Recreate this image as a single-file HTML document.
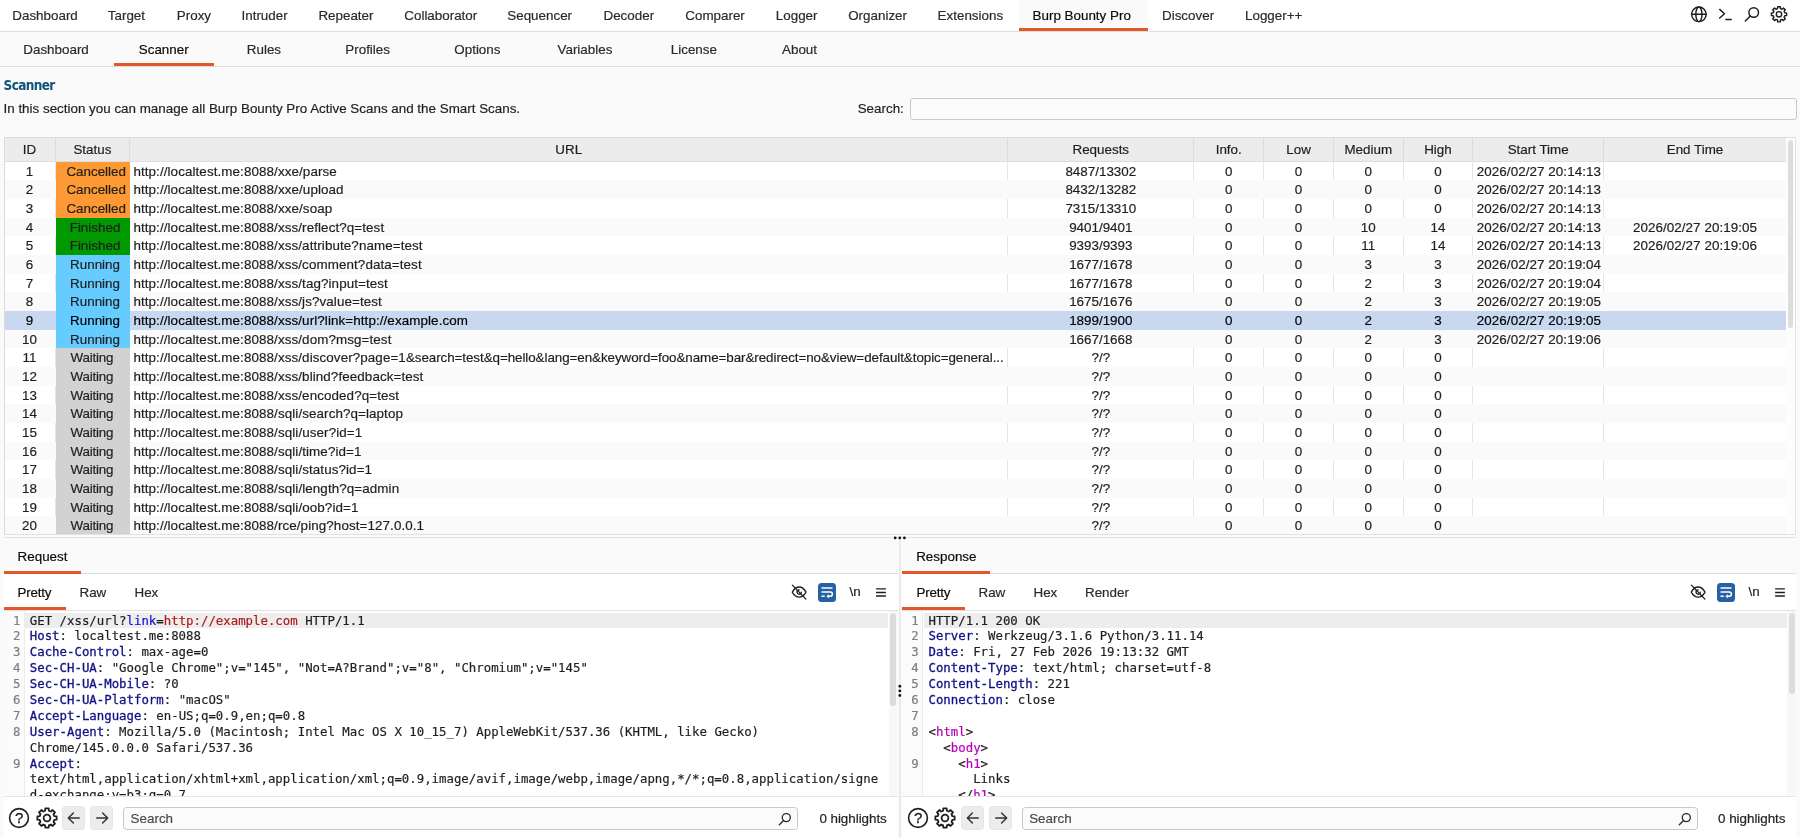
<!DOCTYPE html>
<html lang="en"><head><meta charset="utf-8"><title>Burp Suite - Burp Bounty Pro Scanner</title>
<style>
*{box-sizing:border-box;margin:0;padding:0}
html,body{width:1800px;height:838px;overflow:hidden}
body{position:relative;will-change:transform;-webkit-text-stroke:0.18px;background:#fafafa;font-family:"Liberation Sans",Arial,sans-serif;font-size:13.4px;color:#1e1e1e;line-height:16px}
.abs{position:absolute;white-space:nowrap}
#topbar{position:absolute;left:0;top:0;width:1800px;height:32px;background:#fff;border-bottom:1px solid #dedede}
#topbar .t{position:absolute;top:7.7px;white-space:nowrap;color:#2a2a2a}
#topbar .act{position:absolute;left:1019px;top:0;width:129px;height:31px;background:#fafafa;border-bottom:3px solid #e2572a}
#topbar .t.on{color:#0a0a0a}
#subbar{position:absolute;left:0;top:32px;width:1800px;height:35px;background:#fafafa;border-bottom:1px solid #dedede}
#subbar .t{position:absolute;top:9.8px;white-space:nowrap;color:#2a2a2a}
#subbar .t.on{color:#0a0a0a}
#subbar .ul{position:absolute;left:113.7px;top:31px;width:100.3px;height:3px;background:#e2572a}
#title{left:3.6px;top:76.6px;font-family:"DejaVu Sans Condensed","DejaVu Sans","Liberation Sans",sans-serif;font-weight:bold;font-size:13.5px;color:#0e5478;letter-spacing:-0.65px;-webkit-text-stroke:0}
#desc{left:3.5px;top:100.9px}
#slabel{left:857.7px;top:100.9px}
#sbox{position:absolute;left:909.5px;top:98px;width:887px;height:22px;border:1px solid #c9c9c9;border-radius:3px;background:#fbfbfb}
/* table */
#tbl{position:absolute;left:4px;top:137px;width:1792.3px;height:397.8px;background:#fff;overflow:hidden;border:1px solid #e2e2e2;border-width:0 1px 1px 0}
#tbl:before{content:"";position:absolute;left:0;top:0;width:1px;height:100%;background:#dcdcdc;z-index:3}
.thead{position:absolute;left:0;top:0;width:1782px;height:24.7px;background:#ececec;border-top:1px solid #dcdcdc;border-bottom:1px solid #dedede}
.th{position:absolute;top:0;height:22.7px;line-height:24.6px;overflow:hidden;text-align:center;border-right:1px solid #dcdcdc;color:#1e1e1e}
.tr{position:absolute;left:0;width:1782px;height:18.66px;background:#fff}
.tr.alt{background:#fafafa}
.tr.sel{background:#c8d8f0}
.td{position:absolute;top:0;height:18.66px;line-height:19.7px;text-align:center;white-space:nowrap;overflow:hidden;border-right:1px solid #e6e6e6;color:#1e1e1e}
.tr.alt .td{border-right-color:transparent}
.tr.sel .td{border-right-color:transparent;color:#000}
.td.c2{text-align:left;padding-left:3.2px;letter-spacing:0.095px}
.td.c2.long .la{letter-spacing:0.095px}
.td.c2.long .lb{letter-spacing:-0.066px}
.td.c8{text-align:left;padding-left:3.5px}
.td.c8,.td.c9{letter-spacing:0.07px}
.td.c1{border-right:0}
.s-can{padding-left:6.6px}
.s-fin,.s-run{padding-left:4.3px}
.s-wai{padding-right:2px;letter-spacing:-0.2px}
.s-can{background:#ff9933}
.s-fin{background:#009900}
.s-run{background:#66ccff}
.s-wai{background:#d2d2d2}
.vsb{position:absolute;left:1782px;top:0;width:10px;height:100%;background:#fdfdfd;border-top:1px solid #dcdcdc}
.vsb i{position:absolute;left:2.1px;top:1.8px;width:5.2px;height:188.5px;border-radius:3px;background:#dddddd}
/* bottom panes */
#hsplit{position:absolute;left:4px;top:537px;width:1792.3px;height:1px;background:#e3e3e3}
#hdots{position:absolute;left:892.2px;top:534px;width:16px;height:8px;z-index:5}
#vsplit{position:absolute;left:899.1px;top:538px;width:1.7px;height:300px;background:#ebebeb}
#vdots{position:absolute;left:896px;top:682.5px;width:8px;height:16px;z-index:5}
.pane{position:absolute;top:538px;width:893.7px;height:300px;background:#fff;overflow:hidden}
.ptitle{position:absolute;left:0;top:0;width:100%;height:36.3px;background:#fafafa;border-bottom:1px solid #dedede}
.ptitle span{position:absolute;left:13.6px;top:11.3px;color:#0a0a0a;white-space:nowrap}
.ptitle i{position:absolute;left:0;top:32.8px;height:3px;background:#e2572a}
.ptabs{position:absolute;left:0;top:36.3px;width:100%;height:36.4px;background:#fff;border-bottom:1px solid #e0e0e0}
.pt{position:absolute;top:10.7px;white-space:nowrap;color:#2a2a2a}
.pt.on{color:#0a0a0a;letter-spacing:-0.2px}
.pul{position:absolute;left:0;top:32.7px;height:3px;background:#e2572a}
.ic{position:absolute}
.eye{left:786.8px;top:9.7px}
.wrapb{left:813.8px;top:8.5px;width:18.5px;height:19px;border-radius:3.5px;background:#2462a5}
.wrapb svg{position:absolute;left:0;top:0.1px}
.nl{left:845.5px;top:9.7px;font-size:13.400px;color:#1e1e1e;white-space:nowrap}
.ham{left:871.2px;top:12.3px}
.ed{position:absolute;left:0;top:72.7px;width:100%;height:185.6px;background:#fff;overflow:hidden;font-family:"DejaVu Sans Mono","Liberation Mono",monospace;font-size:12.37px;line-height:15.885px;color:#1e1e1e}
.gut{position:absolute;left:0;top:0;width:20.7px;height:100%;background:#fbfbfb;border-right:1px solid #ececec}
.hl{position:absolute;left:21px;top:2.2px;width:863px;height:15.2px;background:#ededed}
.ln{position:absolute;left:0;height:15.885px;white-space:pre;top:0;margin-top:2.9px}
.ln .no{position:absolute;left:0;top:0;width:16.5px;text-align:right;font-weight:normal;color:#7e7e7e}
.ln .tx{position:absolute;left:25.8px;top:0;white-space:pre}
.ln .hn{color:#111186;-webkit-text-stroke:0.3px #111186}
.ln .pn{color:#1111cc}
.ln .pv{color:#b11a1a}
.ln .tg{color:#ba00ba;-webkit-text-stroke:0.2px #ba00ba}
.esb{position:absolute;left:884.5px;top:0;width:9.2px;height:100%;background:#f8f8f8}
.esb i{position:absolute;left:1.800px;top:2.3px;width:5.500px;height:90px;border-radius:3px;background:#dcdcdc}
.pfoot{position:absolute;left:0;top:258.3px;width:100%;height:42px;background:#fff;border-top:1px solid #e6e6e6}
.help{left:4.2px;top:10.0px}
.gear2{left:30.6px;top:9.0px}
.nb{position:absolute;top:9.2px;width:22.8px;height:23.1px;border-radius:3.5px;background:#ececec;border:1px solid #e6e6e6}
.nb svg{position:absolute;left:2.7px;top:2.9px}
.sbx{position:absolute;left:119.1px;top:9.9px;width:675.3px;height:22.4px;border:1px solid #c9c9c9;border-radius:3.5px;background:#fbfbfb}
.sbx span{position:absolute;left:6.5px;top:3.2px;color:#4a4a4a}
.sbx .mag{position:absolute;left:654.3px;top:4px}
.hl0{position:absolute;left:815.4px;top:13.8px;white-space:nowrap;color:#1e1e1e;letter-spacing:-0.03px}
#ticons{position:absolute;left:1685px;top:0}
#res{width:894.2px}
#res .ic{margin-left:0.8px}
#res .esb{margin-left:0.6px}
#res .hl{left:21.8px;width:863px}
.td.c9,.th:last-child{border-right:0}
#res .sbx{width:676px}
#res .hl0{margin-left:0.5px}
#res .sbx .mag{margin-left:0.6px}
#res .ln .tx{left:26.3px}
#res .pt{margin-left:0.8px}
#res .ptitle span{margin-left:0.4px}
#res .gear2{margin-left:-0.2px}
#res .nb,#res .sbx{margin-left:0.4px}

</style></head>
<body>
<div id="topbar">
<div class="act"></div>
<span class="t" style="left:12.3px">Dashboard</span>
<span class="t" style="left:107.8px">Target</span>
<span class="t" style="left:176.8px">Proxy</span>
<span class="t" style="left:241.5px">Intruder</span>
<span class="t" style="left:318.4px">Repeater</span>
<span class="t" style="left:404.3px">Collaborator</span>
<span class="t" style="left:507.3px">Sequencer</span>
<span class="t" style="left:603.5px">Decoder</span>
<span class="t" style="left:685.3px">Comparer</span>
<span class="t" style="left:775.8px">Logger</span>
<span class="t" style="left:848.2px">Organizer</span>
<span class="t" style="left:937.6px">Extensions</span>
<span class="t on" style="left:1032.6px">Burp Bounty Pro</span>
<span class="t" style="left:1162px">Discover</span>
<span class="t" style="left:1245px">Logger++</span>
<svg id="ticons" viewBox="0 0 110 31" width="110" height="31"><g fill="none" stroke="#1e1e1e" stroke-width="1.450" stroke-linecap="round" stroke-linejoin="round">
<circle cx="13.900" cy="14.300" r="7.300"/><ellipse cx="13.900" cy="14.300" rx="3.100" ry="7.300"/><path d="M6.600 14.300h14.600"/>
<path d="M34.700 9.400l4.800 4.300-4.800 4.300M40.800 19.400h5.400"/>
<circle cx="68.700" cy="12.500" r="4.800"/><path d="M65.300 16L60.300 21"/>
<path d="M92.52 8.59 L92.68 6.71 L95.32 6.71 L95.48 8.59 L97.00 9.22 L98.43 8.00 L100.30 9.87 L99.08 11.30 L99.71 12.82 L101.59 12.98 L101.59 15.62 L99.71 15.78 L99.08 17.30 L100.30 18.73 L98.43 20.60 L97.00 19.38 L95.48 20.01 L95.32 21.89 L92.68 21.89 L92.52 20.01 L91.00 19.38 L89.57 20.60 L87.70 18.73 L88.92 17.30 L88.29 15.78 L86.41 15.62 L86.41 12.98 L88.29 12.82 L88.92 11.30 L87.70 9.87 L89.57 8.00 L91.00 9.22Z"/><circle cx="94" cy="14.300" r="2.700"/>
</g></svg>
</div>
<div id="subbar">
<div class="ul"></div>
<span class="t" style="left:23.3px">Dashboard</span>
<span class="t on" style="left:138.8px">Scanner</span>
<span class="t" style="left:246.8px">Rules</span>
<span class="t" style="left:345.3px">Profiles</span>
<span class="t" style="left:454.3px">Options</span>
<span class="t" style="left:557.5px">Variables</span>
<span class="t" style="left:670.8px">License</span>
<span class="t" style="left:782px">About</span>
</div>
<div id="title" class="abs">Scanner</div>
<div id="desc" class="abs">In this section you can manage all Burp Bounty Pro Active Scans and the Smart Scans.</div>
<div id="slabel" class="abs">Search:</div>
<div id="sbox"></div>
<div id="tbl">
<div class="thead">
<div class="th" style="left:0.4px;width:51.2px">ID</div>
<div class="th" style="left:51.6px;width:74.6px">Status</div>
<div class="th" style="left:126.2px;width:878.1px">URL</div>
<div class="th" style="left:1004.3px;width:186.0px">Requests</div>
<div class="th" style="left:1190.3px;width:69.9px">Info.</div>
<div class="th" style="left:1260.2px;width:69.8px">Low</div>
<div class="th" style="left:1330.0px;width:69.6px">Medium</div>
<div class="th" style="left:1399.6px;width:69.7px">High</div>
<div class="th" style="left:1469.3px;width:130.7px">Start Time</div>
<div class="th" style="left:1600.0px;width:182.0px">End Time</div>
</div>
<div class="tr" style="top:24.70px">
<div class="td c0" style="left:0.4px;width:51.2px"><span>1</span></div>
<div class="td c1 s-can" style="left:51.6px;width:74.6px"><span>Cancelled</span></div>
<div class="td c2" style="left:126.2px;width:878.1px"><span>http://localtest.me:8088/xxe/parse</span></div>
<div class="td c3" style="left:1004.3px;width:186.0px"><span>8487/13302</span></div>
<div class="td c4" style="left:1190.3px;width:69.9px"><span>0</span></div>
<div class="td c5" style="left:1260.2px;width:69.8px"><span>0</span></div>
<div class="td c6" style="left:1330.0px;width:69.6px"><span>0</span></div>
<div class="td c7" style="left:1399.6px;width:69.7px"><span>0</span></div>
<div class="td c8" style="left:1469.3px;width:130.7px"><span>2026/02/27 20:14:13</span></div>
<div class="td c9" style="left:1600.0px;width:182.0px"><span></span></div>
</div>
<div class="tr alt" style="top:43.36px">
<div class="td c0" style="left:0.4px;width:51.2px"><span>2</span></div>
<div class="td c1 s-can" style="left:51.6px;width:74.6px"><span>Cancelled</span></div>
<div class="td c2" style="left:126.2px;width:878.1px"><span>http://localtest.me:8088/xxe/upload</span></div>
<div class="td c3" style="left:1004.3px;width:186.0px"><span>8432/13282</span></div>
<div class="td c4" style="left:1190.3px;width:69.9px"><span>0</span></div>
<div class="td c5" style="left:1260.2px;width:69.8px"><span>0</span></div>
<div class="td c6" style="left:1330.0px;width:69.6px"><span>0</span></div>
<div class="td c7" style="left:1399.6px;width:69.7px"><span>0</span></div>
<div class="td c8" style="left:1469.3px;width:130.7px"><span>2026/02/27 20:14:13</span></div>
<div class="td c9" style="left:1600.0px;width:182.0px"><span></span></div>
</div>
<div class="tr" style="top:62.02px">
<div class="td c0" style="left:0.4px;width:51.2px"><span>3</span></div>
<div class="td c1 s-can" style="left:51.6px;width:74.6px"><span>Cancelled</span></div>
<div class="td c2" style="left:126.2px;width:878.1px"><span>http://localtest.me:8088/xxe/soap</span></div>
<div class="td c3" style="left:1004.3px;width:186.0px"><span>7315/13310</span></div>
<div class="td c4" style="left:1190.3px;width:69.9px"><span>0</span></div>
<div class="td c5" style="left:1260.2px;width:69.8px"><span>0</span></div>
<div class="td c6" style="left:1330.0px;width:69.6px"><span>0</span></div>
<div class="td c7" style="left:1399.6px;width:69.7px"><span>0</span></div>
<div class="td c8" style="left:1469.3px;width:130.7px"><span>2026/02/27 20:14:13</span></div>
<div class="td c9" style="left:1600.0px;width:182.0px"><span></span></div>
</div>
<div class="tr alt" style="top:80.68px">
<div class="td c0" style="left:0.4px;width:51.2px"><span>4</span></div>
<div class="td c1 s-fin" style="left:51.6px;width:74.6px"><span>Finished</span></div>
<div class="td c2" style="left:126.2px;width:878.1px"><span>http://localtest.me:8088/xss/reflect?q=test</span></div>
<div class="td c3" style="left:1004.3px;width:186.0px"><span>9401/9401</span></div>
<div class="td c4" style="left:1190.3px;width:69.9px"><span>0</span></div>
<div class="td c5" style="left:1260.2px;width:69.8px"><span>0</span></div>
<div class="td c6" style="left:1330.0px;width:69.6px"><span>10</span></div>
<div class="td c7" style="left:1399.6px;width:69.7px"><span>14</span></div>
<div class="td c8" style="left:1469.3px;width:130.7px"><span>2026/02/27 20:14:13</span></div>
<div class="td c9" style="left:1600.0px;width:182.0px"><span>2026/02/27 20:19:05</span></div>
</div>
<div class="tr" style="top:99.34px">
<div class="td c0" style="left:0.4px;width:51.2px"><span>5</span></div>
<div class="td c1 s-fin" style="left:51.6px;width:74.6px"><span>Finished</span></div>
<div class="td c2" style="left:126.2px;width:878.1px"><span>http://localtest.me:8088/xss/attribute?name=test</span></div>
<div class="td c3" style="left:1004.3px;width:186.0px"><span>9393/9393</span></div>
<div class="td c4" style="left:1190.3px;width:69.9px"><span>0</span></div>
<div class="td c5" style="left:1260.2px;width:69.8px"><span>0</span></div>
<div class="td c6" style="left:1330.0px;width:69.6px"><span>11</span></div>
<div class="td c7" style="left:1399.6px;width:69.7px"><span>14</span></div>
<div class="td c8" style="left:1469.3px;width:130.7px"><span>2026/02/27 20:14:13</span></div>
<div class="td c9" style="left:1600.0px;width:182.0px"><span>2026/02/27 20:19:06</span></div>
</div>
<div class="tr alt" style="top:118.00px">
<div class="td c0" style="left:0.4px;width:51.2px"><span>6</span></div>
<div class="td c1 s-run" style="left:51.6px;width:74.6px"><span>Running</span></div>
<div class="td c2" style="left:126.2px;width:878.1px"><span>http://localtest.me:8088/xss/comment?data=test</span></div>
<div class="td c3" style="left:1004.3px;width:186.0px"><span>1677/1678</span></div>
<div class="td c4" style="left:1190.3px;width:69.9px"><span>0</span></div>
<div class="td c5" style="left:1260.2px;width:69.8px"><span>0</span></div>
<div class="td c6" style="left:1330.0px;width:69.6px"><span>3</span></div>
<div class="td c7" style="left:1399.6px;width:69.7px"><span>3</span></div>
<div class="td c8" style="left:1469.3px;width:130.7px"><span>2026/02/27 20:19:04</span></div>
<div class="td c9" style="left:1600.0px;width:182.0px"><span></span></div>
</div>
<div class="tr" style="top:136.66px">
<div class="td c0" style="left:0.4px;width:51.2px"><span>7</span></div>
<div class="td c1 s-run" style="left:51.6px;width:74.6px"><span>Running</span></div>
<div class="td c2" style="left:126.2px;width:878.1px"><span>http://localtest.me:8088/xss/tag?input=test</span></div>
<div class="td c3" style="left:1004.3px;width:186.0px"><span>1677/1678</span></div>
<div class="td c4" style="left:1190.3px;width:69.9px"><span>0</span></div>
<div class="td c5" style="left:1260.2px;width:69.8px"><span>0</span></div>
<div class="td c6" style="left:1330.0px;width:69.6px"><span>2</span></div>
<div class="td c7" style="left:1399.6px;width:69.7px"><span>3</span></div>
<div class="td c8" style="left:1469.3px;width:130.7px"><span>2026/02/27 20:19:04</span></div>
<div class="td c9" style="left:1600.0px;width:182.0px"><span></span></div>
</div>
<div class="tr alt" style="top:155.32px">
<div class="td c0" style="left:0.4px;width:51.2px"><span>8</span></div>
<div class="td c1 s-run" style="left:51.6px;width:74.6px"><span>Running</span></div>
<div class="td c2" style="left:126.2px;width:878.1px"><span>http://localtest.me:8088/xss/js?value=test</span></div>
<div class="td c3" style="left:1004.3px;width:186.0px"><span>1675/1676</span></div>
<div class="td c4" style="left:1190.3px;width:69.9px"><span>0</span></div>
<div class="td c5" style="left:1260.2px;width:69.8px"><span>0</span></div>
<div class="td c6" style="left:1330.0px;width:69.6px"><span>2</span></div>
<div class="td c7" style="left:1399.6px;width:69.7px"><span>3</span></div>
<div class="td c8" style="left:1469.3px;width:130.7px"><span>2026/02/27 20:19:05</span></div>
<div class="td c9" style="left:1600.0px;width:182.0px"><span></span></div>
</div>
<div class="tr sel" style="top:173.98px">
<div class="td c0" style="left:0.4px;width:51.2px"><span>9</span></div>
<div class="td c1 s-run" style="left:51.6px;width:74.6px"><span>Running</span></div>
<div class="td c2" style="left:126.2px;width:878.1px"><span>http://localtest.me:8088/xss/url?link=http://example.com</span></div>
<div class="td c3" style="left:1004.3px;width:186.0px"><span>1899/1900</span></div>
<div class="td c4" style="left:1190.3px;width:69.9px"><span>0</span></div>
<div class="td c5" style="left:1260.2px;width:69.8px"><span>0</span></div>
<div class="td c6" style="left:1330.0px;width:69.6px"><span>2</span></div>
<div class="td c7" style="left:1399.6px;width:69.7px"><span>3</span></div>
<div class="td c8" style="left:1469.3px;width:130.7px"><span>2026/02/27 20:19:05</span></div>
<div class="td c9" style="left:1600.0px;width:182.0px"><span></span></div>
</div>
<div class="tr alt" style="top:192.64px">
<div class="td c0" style="left:0.4px;width:51.2px"><span>10</span></div>
<div class="td c1 s-run" style="left:51.6px;width:74.6px"><span>Running</span></div>
<div class="td c2" style="left:126.2px;width:878.1px"><span>http://localtest.me:8088/xss/dom?msg=test</span></div>
<div class="td c3" style="left:1004.3px;width:186.0px"><span>1667/1668</span></div>
<div class="td c4" style="left:1190.3px;width:69.9px"><span>0</span></div>
<div class="td c5" style="left:1260.2px;width:69.8px"><span>0</span></div>
<div class="td c6" style="left:1330.0px;width:69.6px"><span>2</span></div>
<div class="td c7" style="left:1399.6px;width:69.7px"><span>3</span></div>
<div class="td c8" style="left:1469.3px;width:130.7px"><span>2026/02/27 20:19:06</span></div>
<div class="td c9" style="left:1600.0px;width:182.0px"><span></span></div>
</div>
<div class="tr" style="top:211.30px">
<div class="td c0" style="left:0.4px;width:51.2px"><span>11</span></div>
<div class="td c1 s-wai" style="left:51.6px;width:74.6px"><span>Waiting</span></div>
<div class="td c2 long" style="left:126.2px;width:878.1px"><span class="la">http://localtest.me:8088/xss/discover?page=1</span><span class="lb">&amp;search=test&amp;q=hello&amp;lang=en&amp;keyword=foo&amp;name=bar&amp;redirect=no&amp;view=default&amp;topic=general...</span></div>
<div class="td c3" style="left:1004.3px;width:186.0px"><span>?/?</span></div>
<div class="td c4" style="left:1190.3px;width:69.9px"><span>0</span></div>
<div class="td c5" style="left:1260.2px;width:69.8px"><span>0</span></div>
<div class="td c6" style="left:1330.0px;width:69.6px"><span>0</span></div>
<div class="td c7" style="left:1399.6px;width:69.7px"><span>0</span></div>
<div class="td c8" style="left:1469.3px;width:130.7px"><span></span></div>
<div class="td c9" style="left:1600.0px;width:182.0px"><span></span></div>
</div>
<div class="tr alt" style="top:229.96px">
<div class="td c0" style="left:0.4px;width:51.2px"><span>12</span></div>
<div class="td c1 s-wai" style="left:51.6px;width:74.6px"><span>Waiting</span></div>
<div class="td c2" style="left:126.2px;width:878.1px"><span>http://localtest.me:8088/xss/blind?feedback=test</span></div>
<div class="td c3" style="left:1004.3px;width:186.0px"><span>?/?</span></div>
<div class="td c4" style="left:1190.3px;width:69.9px"><span>0</span></div>
<div class="td c5" style="left:1260.2px;width:69.8px"><span>0</span></div>
<div class="td c6" style="left:1330.0px;width:69.6px"><span>0</span></div>
<div class="td c7" style="left:1399.6px;width:69.7px"><span>0</span></div>
<div class="td c8" style="left:1469.3px;width:130.7px"><span></span></div>
<div class="td c9" style="left:1600.0px;width:182.0px"><span></span></div>
</div>
<div class="tr" style="top:248.62px">
<div class="td c0" style="left:0.4px;width:51.2px"><span>13</span></div>
<div class="td c1 s-wai" style="left:51.6px;width:74.6px"><span>Waiting</span></div>
<div class="td c2" style="left:126.2px;width:878.1px"><span>http://localtest.me:8088/xss/encoded?q=test</span></div>
<div class="td c3" style="left:1004.3px;width:186.0px"><span>?/?</span></div>
<div class="td c4" style="left:1190.3px;width:69.9px"><span>0</span></div>
<div class="td c5" style="left:1260.2px;width:69.8px"><span>0</span></div>
<div class="td c6" style="left:1330.0px;width:69.6px"><span>0</span></div>
<div class="td c7" style="left:1399.6px;width:69.7px"><span>0</span></div>
<div class="td c8" style="left:1469.3px;width:130.7px"><span></span></div>
<div class="td c9" style="left:1600.0px;width:182.0px"><span></span></div>
</div>
<div class="tr alt" style="top:267.28px">
<div class="td c0" style="left:0.4px;width:51.2px"><span>14</span></div>
<div class="td c1 s-wai" style="left:51.6px;width:74.6px"><span>Waiting</span></div>
<div class="td c2" style="left:126.2px;width:878.1px"><span>http://localtest.me:8088/sqli/search?q=laptop</span></div>
<div class="td c3" style="left:1004.3px;width:186.0px"><span>?/?</span></div>
<div class="td c4" style="left:1190.3px;width:69.9px"><span>0</span></div>
<div class="td c5" style="left:1260.2px;width:69.8px"><span>0</span></div>
<div class="td c6" style="left:1330.0px;width:69.6px"><span>0</span></div>
<div class="td c7" style="left:1399.6px;width:69.7px"><span>0</span></div>
<div class="td c8" style="left:1469.3px;width:130.7px"><span></span></div>
<div class="td c9" style="left:1600.0px;width:182.0px"><span></span></div>
</div>
<div class="tr" style="top:285.94px">
<div class="td c0" style="left:0.4px;width:51.2px"><span>15</span></div>
<div class="td c1 s-wai" style="left:51.6px;width:74.6px"><span>Waiting</span></div>
<div class="td c2" style="left:126.2px;width:878.1px"><span>http://localtest.me:8088/sqli/user?id=1</span></div>
<div class="td c3" style="left:1004.3px;width:186.0px"><span>?/?</span></div>
<div class="td c4" style="left:1190.3px;width:69.9px"><span>0</span></div>
<div class="td c5" style="left:1260.2px;width:69.8px"><span>0</span></div>
<div class="td c6" style="left:1330.0px;width:69.6px"><span>0</span></div>
<div class="td c7" style="left:1399.6px;width:69.7px"><span>0</span></div>
<div class="td c8" style="left:1469.3px;width:130.7px"><span></span></div>
<div class="td c9" style="left:1600.0px;width:182.0px"><span></span></div>
</div>
<div class="tr alt" style="top:304.60px">
<div class="td c0" style="left:0.4px;width:51.2px"><span>16</span></div>
<div class="td c1 s-wai" style="left:51.6px;width:74.6px"><span>Waiting</span></div>
<div class="td c2" style="left:126.2px;width:878.1px"><span>http://localtest.me:8088/sqli/time?id=1</span></div>
<div class="td c3" style="left:1004.3px;width:186.0px"><span>?/?</span></div>
<div class="td c4" style="left:1190.3px;width:69.9px"><span>0</span></div>
<div class="td c5" style="left:1260.2px;width:69.8px"><span>0</span></div>
<div class="td c6" style="left:1330.0px;width:69.6px"><span>0</span></div>
<div class="td c7" style="left:1399.6px;width:69.7px"><span>0</span></div>
<div class="td c8" style="left:1469.3px;width:130.7px"><span></span></div>
<div class="td c9" style="left:1600.0px;width:182.0px"><span></span></div>
</div>
<div class="tr" style="top:323.26px">
<div class="td c0" style="left:0.4px;width:51.2px"><span>17</span></div>
<div class="td c1 s-wai" style="left:51.6px;width:74.6px"><span>Waiting</span></div>
<div class="td c2" style="left:126.2px;width:878.1px"><span>http://localtest.me:8088/sqli/status?id=1</span></div>
<div class="td c3" style="left:1004.3px;width:186.0px"><span>?/?</span></div>
<div class="td c4" style="left:1190.3px;width:69.9px"><span>0</span></div>
<div class="td c5" style="left:1260.2px;width:69.8px"><span>0</span></div>
<div class="td c6" style="left:1330.0px;width:69.6px"><span>0</span></div>
<div class="td c7" style="left:1399.6px;width:69.7px"><span>0</span></div>
<div class="td c8" style="left:1469.3px;width:130.7px"><span></span></div>
<div class="td c9" style="left:1600.0px;width:182.0px"><span></span></div>
</div>
<div class="tr alt" style="top:341.92px">
<div class="td c0" style="left:0.4px;width:51.2px"><span>18</span></div>
<div class="td c1 s-wai" style="left:51.6px;width:74.6px"><span>Waiting</span></div>
<div class="td c2" style="left:126.2px;width:878.1px"><span>http://localtest.me:8088/sqli/length?q=admin</span></div>
<div class="td c3" style="left:1004.3px;width:186.0px"><span>?/?</span></div>
<div class="td c4" style="left:1190.3px;width:69.9px"><span>0</span></div>
<div class="td c5" style="left:1260.2px;width:69.8px"><span>0</span></div>
<div class="td c6" style="left:1330.0px;width:69.6px"><span>0</span></div>
<div class="td c7" style="left:1399.6px;width:69.7px"><span>0</span></div>
<div class="td c8" style="left:1469.3px;width:130.7px"><span></span></div>
<div class="td c9" style="left:1600.0px;width:182.0px"><span></span></div>
</div>
<div class="tr" style="top:360.58px">
<div class="td c0" style="left:0.4px;width:51.2px"><span>19</span></div>
<div class="td c1 s-wai" style="left:51.6px;width:74.6px"><span>Waiting</span></div>
<div class="td c2" style="left:126.2px;width:878.1px"><span>http://localtest.me:8088/sqli/oob?id=1</span></div>
<div class="td c3" style="left:1004.3px;width:186.0px"><span>?/?</span></div>
<div class="td c4" style="left:1190.3px;width:69.9px"><span>0</span></div>
<div class="td c5" style="left:1260.2px;width:69.8px"><span>0</span></div>
<div class="td c6" style="left:1330.0px;width:69.6px"><span>0</span></div>
<div class="td c7" style="left:1399.6px;width:69.7px"><span>0</span></div>
<div class="td c8" style="left:1469.3px;width:130.7px"><span></span></div>
<div class="td c9" style="left:1600.0px;width:182.0px"><span></span></div>
</div>
<div class="tr alt" style="top:379.24px">
<div class="td c0" style="left:0.4px;width:51.2px"><span>20</span></div>
<div class="td c1 s-wai" style="left:51.6px;width:74.6px"><span>Waiting</span></div>
<div class="td c2" style="left:126.2px;width:878.1px"><span>http://localtest.me:8088/rce/ping?host=127.0.0.1</span></div>
<div class="td c3" style="left:1004.3px;width:186.0px"><span>?/?</span></div>
<div class="td c4" style="left:1190.3px;width:69.9px"><span>0</span></div>
<div class="td c5" style="left:1260.2px;width:69.8px"><span>0</span></div>
<div class="td c6" style="left:1330.0px;width:69.6px"><span>0</span></div>
<div class="td c7" style="left:1399.6px;width:69.7px"><span>0</span></div>
<div class="td c8" style="left:1469.3px;width:130.7px"><span></span></div>
<div class="td c9" style="left:1600.0px;width:182.0px"><span></span></div>
</div>
<div class="vsb"><i></i></div>
</div><div id="hsplit"></div><svg id="hdots" viewBox="0 0 16 8" width="16" height="8"><g fill="#141414"><circle cx="3.200" cy="3.900" r="1.400"/><circle cx="7.800" cy="3.900" r="1.400"/><circle cx="12.400" cy="3.900" r="1.400"/></g></svg>
<div class="pane" id="req" style="left:4px">
<div class="ptitle"><span>Request</span><i style="width:77px"></i></div>
<div class="ptabs">
<span class="pt on" style="left:13.5px">Pretty</span>
<span class="pt" style="left:75.5px">Raw</span>
<span class="pt" style="left:130.5px">Hex</span>
<i class="pul" style="width:62px"></i>
<svg class="ic eye" viewBox="0 0 16 16" width="16" height="16"><g fill="none" stroke="#1e1e1e" stroke-width="1.300" stroke-linecap="round" stroke-linejoin="round"><path d="M1.300 8.100C3.200 4.600 5.600 3 8.150 3s4.950 1.600 6.850 5.100c-1.900 3.500-4.300 5.100-6.850 5.100S3.200 11.600 1.300 8.100z"/><path d="M10.300 8.100a2.150 2.150 0 1 1-2.150-2.150"/><path d="M1.400 1.100L14.900 15.100"/></g></svg><div class="ic wrapb"><svg viewBox="0 0 18 18" width="18" height="18"><g fill="none" stroke="#fff" stroke-width="1.5" stroke-linecap="butt" stroke-linejoin="round"><path d="M3.5 5h11"/><path d="M3.500 9h8.8a2.100 2.100 0 0 1 0 4.200H10"/><path d="M3.500 13.200h3.200"/></g><path d="M10.900 11.200v4l-2.600-2z" fill="#fff"/></svg></div><span class="ic nl">\n</span><svg class="ic ham" viewBox="0 0 12 12" width="12" height="12"><g stroke="#1e1e1e" stroke-width="1.400"><path d="M1.100 1.900h9.800M1.100 5.450h9.800M1.100 9h9.800"/></g></svg>
</div>
<div class="ed">
<div class="gut"></div>
<div class="hl"></div>
<div class="ln" style="top:0.00px"><span class="no">1</span><span class="tx">GET /xss/url?<span class="pn">link</span>=<span class="pv">http://example.com</span> HTTP/1.1</span></div>
<div class="ln" style="top:15.88px"><span class="no">2</span><span class="tx"><span class="hn">Host</span>: localtest.me:8088</span></div>
<div class="ln" style="top:31.77px"><span class="no">3</span><span class="tx"><span class="hn">Cache-Control</span>: max-age=0</span></div>
<div class="ln" style="top:47.66px"><span class="no">4</span><span class="tx"><span class="hn">Sec-CH-UA</span>: "Google Chrome";v="145", "Not=A?Brand";v="8", "Chromium";v="145"</span></div>
<div class="ln" style="top:63.54px"><span class="no">5</span><span class="tx"><span class="hn">Sec-CH-UA-Mobile</span>: ?0</span></div>
<div class="ln" style="top:79.42px"><span class="no">6</span><span class="tx"><span class="hn">Sec-CH-UA-Platform</span>: "macOS"</span></div>
<div class="ln" style="top:95.31px"><span class="no">7</span><span class="tx"><span class="hn">Accept-Language</span>: en-US;q=0.9,en;q=0.8</span></div>
<div class="ln" style="top:111.19px"><span class="no">8</span><span class="tx"><span class="hn">User-Agent</span>: Mozilla/5.0 (Macintosh; Intel Mac OS X 10_15_7) AppleWebKit/537.36 (KHTML, like Gecko)</span></div>
<div class="ln" style="top:127.08px"><span class="no"></span><span class="tx">Chrome/145.0.0.0 Safari/537.36</span></div>
<div class="ln" style="top:142.97px"><span class="no">9</span><span class="tx"><span class="hn">Accept</span>:</span></div>
<div class="ln" style="top:158.85px"><span class="no"></span><span class="tx">text/html,application/xhtml+xml,application/xml;q=0.9,image/avif,image/webp,image/apng,*/*;q=0.8,application/signe</span></div>
<div class="ln" style="top:174.73px"><span class="no"></span><span class="tx">d-exchange;v=b3;q=0.7</span></div>
<div class="esb"><i style="height:92.6px"></i></div>
</div>
<div class="pfoot"><svg class="ic help" viewBox="0 0 22 22" width="22" height="22"><circle cx="11" cy="11" r="9.400" fill="none" stroke="#1e1e1e" stroke-width="1.600"/><text x="11.100" y="16.300" text-anchor="middle" font-family="Liberation Sans, sans-serif" font-size="15" fill="#1e1e1e" stroke="#1e1e1e" stroke-width="0.35">?</text></svg><svg class="ic gear2" viewBox="0 0 24 24" width="24" height="24"><g fill="none" stroke="#1e1e1e" stroke-width="1.8" stroke-linejoin="round"><path d="M10.11 4.69 L10.32 2.40 L13.68 2.40 L13.89 4.69 L15.83 5.50 L17.61 4.02 L19.98 6.39 L18.50 8.17 L19.31 10.11 L21.60 10.32 L21.60 13.68 L19.31 13.89 L18.50 15.83 L19.98 17.61 L17.61 19.98 L15.83 18.50 L13.89 19.31 L13.68 21.60 L10.32 21.60 L10.11 19.31 L8.17 18.50 L6.39 19.98 L4.02 17.61 L5.50 15.83 L4.69 13.89 L2.40 13.68 L2.40 10.32 L4.69 10.11 L5.50 8.17 L4.02 6.39 L6.39 4.02 L8.17 5.50Z"/><circle cx="12" cy="12" r="3.400"/></g></svg><div class="nb" style="left:58.400px"><svg viewBox="0 0 16 16" width="16" height="16"><g fill="none" stroke="#333" stroke-width="1.450" stroke-linecap="round" stroke-linejoin="round"><path d="M13.300 8H2.800M7.400 2.900L2.300 8l5.100 5.100"/></g></svg></div><div class="nb" style="left:86.300px"><svg viewBox="0 0 16 16" width="16" height="16"><g fill="none" stroke="#333" stroke-width="1.450" stroke-linecap="round" stroke-linejoin="round"><path d="M2.700 8h10.500M8.600 2.900L13.700 8l-5.100 5.100"/></g></svg></div><div class="sbx"><span>Search</span><svg class="mag" viewBox="0 0 14 14" width="14" height="14"><g fill="none" stroke="#2a2a2a" stroke-width="1.300" stroke-linecap="round"><circle cx="8.300" cy="5.600" r="4.050"/><path d="M5.300 8.700L1.300 12.700"/></g></svg></div><span class="hl0">0 highlights</span></div>
</div>
<div id="vsplit"></div><svg id="vdots" viewBox="0 0 8 16" width="8" height="16"><g fill="#141414"><circle cx="3.850" cy="3.250" r="1.400"/><circle cx="3.850" cy="7.900" r="1.400"/><circle cx="3.850" cy="12.500" r="1.400"/></g></svg>
<div class="pane" id="res" style="left:902.2px">
<div class="ptitle"><span>Response</span><i style="width:87.5px"></i></div>
<div class="ptabs">
<span class="pt on" style="left:13.5px">Pretty</span>
<span class="pt" style="left:75.5px">Raw</span>
<span class="pt" style="left:130.5px">Hex</span>
<span class="pt" style="left:182px">Render</span>
<i class="pul" style="width:62.5px"></i>
<svg class="ic eye" viewBox="0 0 16 16" width="16" height="16"><g fill="none" stroke="#1e1e1e" stroke-width="1.300" stroke-linecap="round" stroke-linejoin="round"><path d="M1.300 8.100C3.200 4.600 5.600 3 8.150 3s4.950 1.600 6.850 5.100c-1.900 3.500-4.300 5.100-6.850 5.100S3.200 11.600 1.300 8.100z"/><path d="M10.300 8.100a2.150 2.150 0 1 1-2.150-2.150"/><path d="M1.400 1.100L14.900 15.100"/></g></svg><div class="ic wrapb"><svg viewBox="0 0 18 18" width="18" height="18"><g fill="none" stroke="#fff" stroke-width="1.5" stroke-linecap="butt" stroke-linejoin="round"><path d="M3.5 5h11"/><path d="M3.500 9h8.8a2.100 2.100 0 0 1 0 4.200H10"/><path d="M3.500 13.200h3.200"/></g><path d="M10.900 11.200v4l-2.600-2z" fill="#fff"/></svg></div><span class="ic nl">\n</span><svg class="ic ham" viewBox="0 0 12 12" width="12" height="12"><g stroke="#1e1e1e" stroke-width="1.400"><path d="M1.100 1.900h9.800M1.100 5.450h9.800M1.100 9h9.800"/></g></svg>
</div>
<div class="ed">
<div class="gut"></div>
<div class="hl"></div>
<div class="ln" style="top:0.00px"><span class="no">1</span><span class="tx">HTTP/1.1 200 OK</span></div>
<div class="ln" style="top:15.88px"><span class="no">2</span><span class="tx"><span class="hn">Server</span>: Werkzeug/3.1.6 Python/3.11.14</span></div>
<div class="ln" style="top:31.77px"><span class="no">3</span><span class="tx"><span class="hn">Date</span>: Fri, 27 Feb 2026 19:13:32 GMT</span></div>
<div class="ln" style="top:47.66px"><span class="no">4</span><span class="tx"><span class="hn">Content-Type</span>: text/html; charset=utf-8</span></div>
<div class="ln" style="top:63.54px"><span class="no">5</span><span class="tx"><span class="hn">Content-Length</span>: 221</span></div>
<div class="ln" style="top:79.42px"><span class="no">6</span><span class="tx"><span class="hn">Connection</span>: close</span></div>
<div class="ln" style="top:95.31px"><span class="no">7</span><span class="tx"></span></div>
<div class="ln" style="top:111.19px"><span class="no">8</span><span class="tx">&lt;<span class="tg">html</span>&gt;</span></div>
<div class="ln" style="top:127.08px"><span class="no"></span><span class="tx">  &lt;<span class="tg">body</span>&gt;</span></div>
<div class="ln" style="top:142.97px"><span class="no">9</span><span class="tx">    &lt;<span class="tg">h1</span>&gt;</span></div>
<div class="ln" style="top:158.85px"><span class="no"></span><span class="tx">      Links</span></div>
<div class="ln" style="top:174.73px"><span class="no"></span><span class="tx">    &lt;/<span class="tg">h1</span>&gt;</span></div>
<div class="esb"><i style="height:81px"></i></div>
</div>
<div class="pfoot"><svg class="ic help" viewBox="0 0 22 22" width="22" height="22"><circle cx="11" cy="11" r="9.400" fill="none" stroke="#1e1e1e" stroke-width="1.600"/><text x="11.100" y="16.300" text-anchor="middle" font-family="Liberation Sans, sans-serif" font-size="15" fill="#1e1e1e" stroke="#1e1e1e" stroke-width="0.35">?</text></svg><svg class="ic gear2" viewBox="0 0 24 24" width="24" height="24"><g fill="none" stroke="#1e1e1e" stroke-width="1.8" stroke-linejoin="round"><path d="M10.11 4.69 L10.32 2.40 L13.68 2.40 L13.89 4.69 L15.83 5.50 L17.61 4.02 L19.98 6.39 L18.50 8.17 L19.31 10.11 L21.60 10.32 L21.60 13.68 L19.31 13.89 L18.50 15.83 L19.98 17.61 L17.61 19.98 L15.83 18.50 L13.89 19.31 L13.68 21.60 L10.32 21.60 L10.11 19.31 L8.17 18.50 L6.39 19.98 L4.02 17.61 L5.50 15.83 L4.69 13.89 L2.40 13.68 L2.40 10.32 L4.69 10.11 L5.50 8.17 L4.02 6.39 L6.39 4.02 L8.17 5.50Z"/><circle cx="12" cy="12" r="3.400"/></g></svg><div class="nb" style="left:58.400px"><svg viewBox="0 0 16 16" width="16" height="16"><g fill="none" stroke="#333" stroke-width="1.450" stroke-linecap="round" stroke-linejoin="round"><path d="M13.300 8H2.800M7.400 2.900L2.300 8l5.100 5.100"/></g></svg></div><div class="nb" style="left:86.300px"><svg viewBox="0 0 16 16" width="16" height="16"><g fill="none" stroke="#333" stroke-width="1.450" stroke-linecap="round" stroke-linejoin="round"><path d="M2.700 8h10.500M8.600 2.900L13.700 8l-5.100 5.100"/></g></svg></div><div class="sbx"><span>Search</span><svg class="mag" viewBox="0 0 14 14" width="14" height="14"><g fill="none" stroke="#2a2a2a" stroke-width="1.300" stroke-linecap="round"><circle cx="8.300" cy="5.600" r="4.050"/><path d="M5.300 8.700L1.300 12.700"/></g></svg></div><span class="hl0">0 highlights</span></div>
</div>
</body></html>
